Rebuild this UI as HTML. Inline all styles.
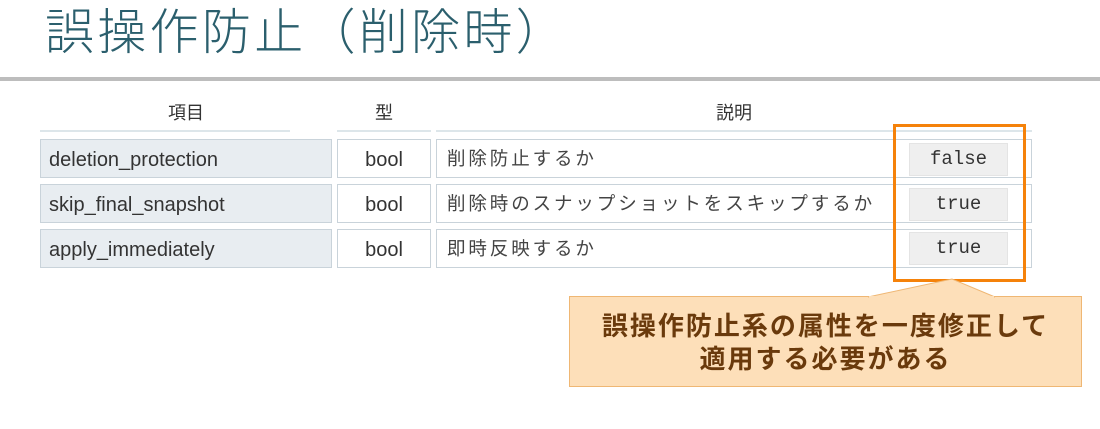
<!DOCTYPE html>
<html><head><meta charset="utf-8"><style>
body{margin:0;width:1100px;height:429px;background:#fff;position:relative;overflow:hidden;font-family:"Liberation Sans","Noto Sans CJK JP",sans-serif;}
.a{position:absolute;box-sizing:border-box;}
.t{left:45px;top:-5px;font-size:49px;font-weight:300;color:#2b5f6d;letter-spacing:3.3px;line-height:68px;white-space:nowrap;font-family:"Noto Sans CJK JP",sans-serif;}
.hl{height:2px;background:#dde6ea;top:130px;}
.h{top:100px;font-size:18px;color:#333;text-align:center;line-height:26px;}
.c{border:1px solid #c9d3da;height:39px;font-size:20px;color:#333;line-height:40px;white-space:nowrap;}
.c1{left:40px;width:292px;background:#e8edf1;padding-left:8px;}
.c2{left:337px;width:94px;text-align:center;background:#fff;}
.c3{left:436px;width:596px;background:#fff;padding-left:10px;font-size:18.5px;letter-spacing:2.9px;color:#444;line-height:38px;}
.code{left:909px;width:99px;height:33px;background:#efefef;border:1px solid #e4e4e4;font-family:"Liberation Mono","DejaVu Sans Mono",monospace;font-size:19px;text-align:center;line-height:31px;color:#333;}
</style></head><body>
<div class="a t">誤操作防止（削除時）</div>
<div class="a" style="left:0;top:77px;width:1100px;height:4px;background:#bdbdbd"></div>
<div class="a h" style="left:40px;width:292px">項目</div>
<div class="a h" style="left:337px;width:94px">型</div>
<div class="a h" style="left:436px;width:596px">説明</div>
<div class="a hl" style="left:40px;width:250px"></div>
<div class="a hl" style="left:337px;width:94px"></div>
<div class="a hl" style="left:436px;width:596px"></div>

<div class="a c c1" style="top:139px">deletion_protection</div>
<div class="a c c2" style="top:139px">bool</div>
<div class="a c c3" style="top:139px">削除防止するか</div>
<div class="a c c1" style="top:184px">skip_final_snapshot</div>
<div class="a c c2" style="top:184px">bool</div>
<div class="a c c3" style="top:184px">削除時のスナップショットをスキップするか</div>
<div class="a c c1" style="top:229px">apply_immediately</div>
<div class="a c c2" style="top:229px">bool</div>
<div class="a c c3" style="top:229px">即時反映するか</div>

<div class="a code" style="top:143px">false</div>
<div class="a code" style="top:188px">true</div>
<div class="a code" style="top:232px">true</div>

<div class="a" style="left:893px;top:124px;width:133px;height:158px;border:3px solid #f5820a"></div>

<svg class="a" style="left:0;top:0" width="1100" height="429">
<rect x="569.5" y="296.5" width="512" height="90" fill="#fddfb9" stroke="#efb774"/>
<polygon points="868,297 952,279 995,297" fill="#fddfb9" stroke="#efb774"/>
<rect x="869" y="296" width="125" height="2" fill="#fddfb9"/>
</svg>
<div class="a" style="left:569px;top:310px;width:513px;text-align:center;font-weight:bold;font-size:26px;line-height:33px;color:#6a3a0c;letter-spacing:2px">誤操作防止系の属性を一度修正して<br>適用する必要がある</div>
</body></html>
